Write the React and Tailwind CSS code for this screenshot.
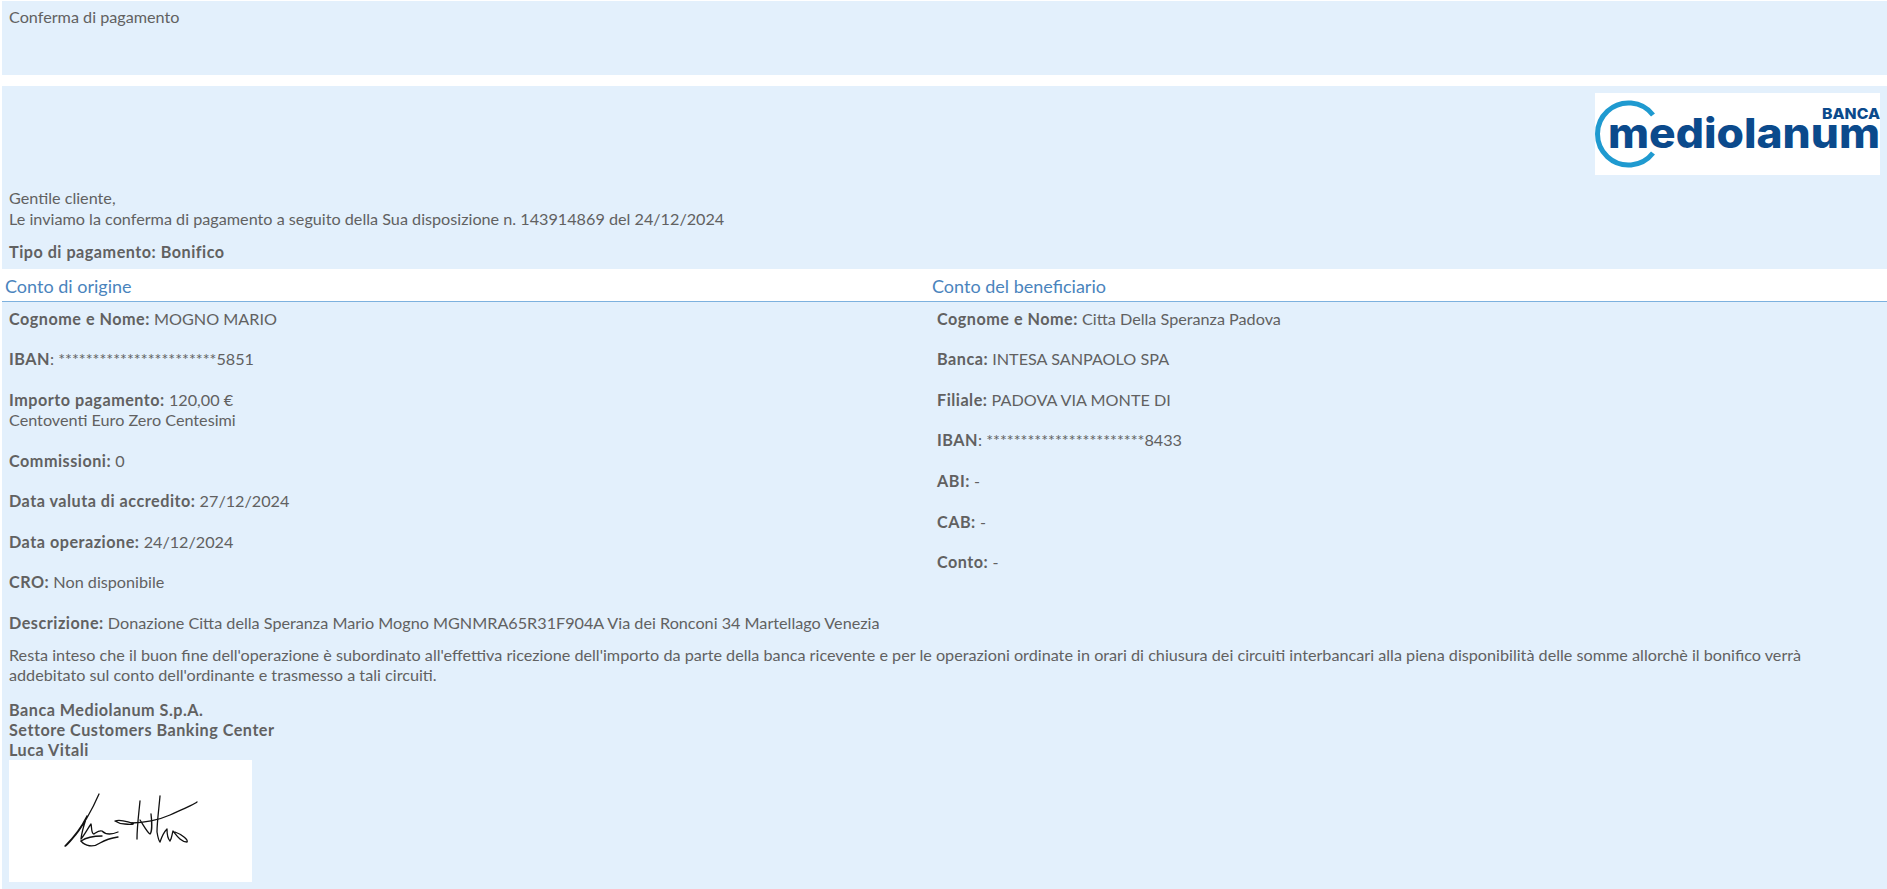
const font = "font-['Lato','Open_Sans',sans-serif]"
const bold = 'font-bold tracking-[0.5px]'

function Logo() {
  return (
    <div className="w-[285px] h-[82px] bg-white shrink-0">
      <svg width="285" height="82" viewBox="0 0 285 82">
        <path d="M 58 22 A 31 31 0 1 0 58 60" fill="none" stroke="#1f9ad0" strokeWidth="5" />
        <text x="13" y="55" textLength="272" lengthAdjust="spacingAndGlyphs" fontFamily="Inter, sans-serif" fontWeight="800" fontSize="41" fill="#0b4a8c" stroke="#fff" strokeWidth="2" paintOrder="stroke">mediolanum</text>
        <text x="227" y="26" textLength="58" lengthAdjust="spacingAndGlyphs" fontFamily="Inter, sans-serif" fontWeight="800" fontSize="15" fill="#0b4a8c">BANCA</text>
      </svg>
    </div>
  )
}

function Firma() {
  return (
    <div className="w-[243px] h-[122px] bg-white">
      <svg width="243" height="122" viewBox="0 0 243 122" fill="none" stroke="#111" strokeWidth="1.3" strokeLinecap="round" strokeLinejoin="round">
        <path d="M90 34 C84 48 72 70 64 78 C60 83 56 87 56 86 C62 80 72 68 78 56 C76 62 73 70 72 79 C76 74 79 68 82 64 C83 68 82 74 85 74 C88 72 90 70 93 71 C96 74 102 75 109 72" />
        <path d="M72 81 C76 86 84 88 91 83 C96 80 102 78 109 77" />
        <path d="M72 81 C78 77 86 76 93 76" />
        <path d="M106 61 C112 59 118 62 123 63 C127 64 122 65 116 64 C112 64 109 63 106 61" />
        <path d="M123 63 C134 63 150 60 161 55 C172 50 184 45 188 42" />
        <path d="M131 41 C130 52 128 66 128 79" />
        <path d="M151 36 C150 48 148 62 148 72 C149 78 150 81 151 82 C153 76 156 71 158 69 C158 74 159 79 161 81 C163 78 163 74 164 71 C168 76 172 82 178 82 C180 80 172 74 166 72" />
        <path d="M131 60 C135 66 138 72 141 74 C143 72 143 62 142 54" />
      </svg>
    </div>
  )
}

function Campo({ label, children }) {
  return (
    <p className="mb-[20.4px]">
      <b className={bold}>{label}</b> {children}
    </p>
  )
}

export default function App() {
  return (
    <div className={`${font} min-h-[889px] bg-white text-[16.2px] leading-[20.2px] text-[#616161] pl-[2px] pt-[1px]`}>
      <div className="h-[74px] bg-[#e3f0fc] px-[7px] pt-[6px] mb-[11px]">Conferma di pagamento</div>

      <div className="h-[803px] bg-[#e3f0fc]">
        <div className="flex justify-end pr-[7px] pt-[7px]">
          <Logo />
        </div>
        <div className="px-[7px] pt-[13px]">
          <p>Gentile cliente,</p>
          <p className="mt-[1px]">Le inviamo la conferma di pagamento a seguito della Sua disposizione n. 143914869 del 24/12/2024</p>
          <p className={`${bold} mt-[13px]`}>Tipo di pagamento: Bonifico</p>
        </div>

        <div className="flex h-[33px] mt-[6px] bg-white border-b border-[#7db1de] text-[18px] leading-[34px] text-[#4a84bd]">
          <div className="w-[930px] pl-[3px]">Conto di origine</div>
          <div>Conto del beneficiario</div>
        </div>

        <div className="flex pt-[7px]">
          <div className="w-[930px] pl-[7px]">
            <Campo label="Cognome e Nome:">MOGNO MARIO</Campo>
            <p className="mb-[20.4px]"><b className={bold}>IBAN</b>: ***********************5851</p>
            <p className="mb-[20.4px]">
              <b className={bold}>Importo pagamento:</b> 120,00 €<br />Centoventi Euro Zero Centesimi
            </p>
            <Campo label="Commissioni:">0</Campo>
            <Campo label="Data valuta di accredito:">27/12/2024</Campo>
            <Campo label="Data operazione:">24/12/2024</Campo>
            <Campo label="CRO:">Non disponibile</Campo>
          </div>
          <div className="pl-[5px]">
            <Campo label="Cognome e Nome:">Citta Della Speranza Padova</Campo>
            <Campo label="Banca:">INTESA SANPAOLO SPA</Campo>
            <Campo label="Filiale:">PADOVA VIA MONTE DI</Campo>
            <p className="mb-[20.4px]"><b className={bold}>IBAN</b>: ***********************8433</p>
            <Campo label="ABI:">-</Campo>
            <Campo label="CAB:">-</Campo>
            <Campo label="Conto:">-</Campo>
          </div>
        </div>

        <div className="px-[7px]">
          <p><b className={bold}>Descrizione:</b> Donazione Citta della Speranza Mario Mogno MGNMRA65R31F904A Via dei Ronconi 34 Martellago Venezia</p>
          <p className="mt-[12px] pr-[40px]">
            Resta inteso che il buon fine dell'operazione è subordinato all'effettiva ricezione dell'importo da parte della banca ricevente e per le operazioni ordinate in orari di chiusura dei circuiti interbancari alla piena disponibilità delle somme allorchè il bonifico verrà addebitato sul conto dell'ordinante e trasmesso a tali circuiti.
          </p>
          <p className={`${bold} mt-[14px]`}>
            Banca Mediolanum S.p.A.<br />Settore Customers Banking Center<br />Luca Vitali
          </p>
          <Firma />
        </div>
      </div>
    </div>
  )
}
